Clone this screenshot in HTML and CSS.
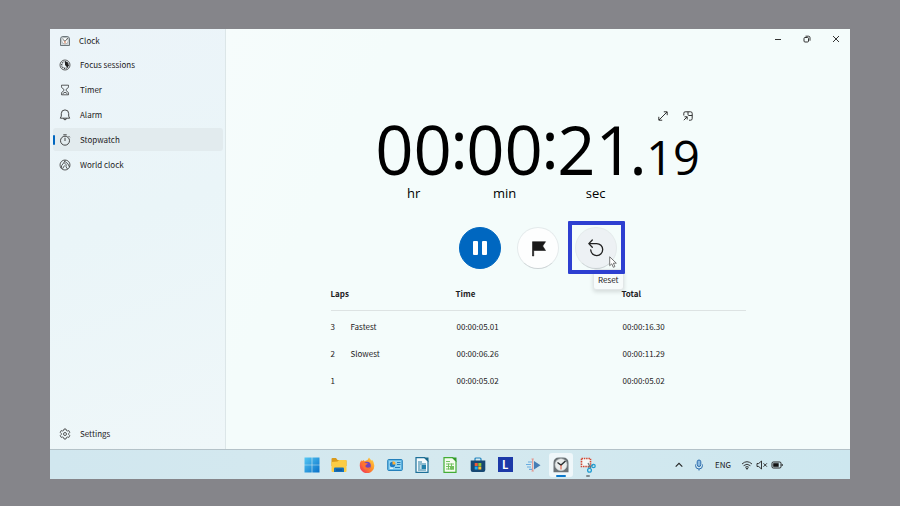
FILE: index.html
```html
<!DOCTYPE html>
<html lang="en">
<head>
<meta charset="utf-8">
<title>Clock</title>
<link rel="stylesheet" href="styles.css">
</head>
<body>
<div class="desktop">
  <div class="app">
    <aside class="sidebar">
      <header class="brand">
        <svg class="icon" viewBox="0 0 12 12"><path d="M1.500 10.500V4Q1.500 1.500 4 1.500h4Q10.500 1.500 10.500 4v6.500z" fill="#d3d9dc" stroke="#6c767b"/><circle cx="6" cy="5.700" r="3.300" fill="#f7fafa" stroke="#8a9397" stroke-width=".6"/><path d="M4 4.500l2 1.800 3-3.300" fill="none" stroke="#666"/><path d="M6 6v2.500" stroke="#e0784c"/></svg>
        <span>Clock</span>
      </header>
      <nav class="menu">
        <a class="item" href="#focus"><svg class="icon" viewBox="0 0 12 12" fill="none" stroke="#333"><circle cx="6" cy="6" r="5" stroke-width=".8"/><circle cx="6" cy="6" r="3.300" stroke-dasharray="1 .7" stroke-width="1.200"/><path d="M6 2.500a3.500 3.500 0 0 1 2.300 6.100L6 6z" fill="#222" stroke="none"/></svg>Focus sessions</a>
        <a class="item" href="#timer"><svg class="icon" viewBox="0 0 12 12" fill="none" stroke="#333" stroke-width=".8"><path d="M2.500 1.200h7v1.600q0 .7-.6 1.200L7 5.500q-.6.500 0 1l1.900 1.500q.6.500.6 1.200v1.600h-7V9.200q0-.7.6-1.200L5 6.500q.6-.5 0-1L3.100 4q-.6-.5-.6-1.200zM3.500 9.800L6 8.200l2.500 1.600"/></svg>Timer</a>
        <a class="item" href="#alarm"><svg class="icon" viewBox="0 0 12 12" fill="none" stroke="#333" stroke-width=".9"><path d="M6 .9a3.700 3.700 0 0 0-3.700 3.700v2.500L1.300 9.200h9.400l-1-2.100V4.600A3.700 3.700 0 0 0 6 .9zM4.600 9.400a1.400 1.400 0 0 0 2.800 0"/></svg>Alarm</a>
        <a class="item active" href="#stopwatch" aria-current="page"><svg class="icon" viewBox="0 0 12 12" fill="none" stroke="#333" stroke-width=".9"><circle cx="6" cy="6.700" r="4.500"/><path d="M4.300.8h3.400M6 3.800V7M9.500 2l1.300 1.300"/></svg>Stopwatch</a>
        <a class="item" href="#world"><svg class="icon" viewBox="0 0 12 12" fill="none" stroke="#333" stroke-width=".8"><circle cx="6" cy="6" r="5"/><path d="M2.200 9.200l.5-2.700L5 3.500l1.200-2.300M5 3.500l2.200 2.300-.2 2L8.500 10M3.500 9.800L5.500 6.500M6 2.500l2.800 2.200L10.500 8"/></svg>World clock</a>
        <a class="item settings" href="#settings"><svg class="icon" viewBox="0 0 12 12" fill="none" stroke="#333" stroke-width=".8"><path d="M5 1h2l.4 1.500.9.500 1.500-.4 1 1.700L9.700 5.500v1l1.100 1.200-1 1.700L8.300 9l-.9.500L7 11H5l-.4-1.500L3.700 9l-1.500.4-1-1.700 1.100-1.200v-1L1.200 4.300l1-1.700 1.500.4.900-.5z" stroke-linejoin="round"/><circle cx="6" cy="6" r="1.500"/></svg>Settings</a>
      </nav>
    </aside>
    <main class="main">
      <header class="titlebar">
        <button class="caption" aria-label="Minimize"><svg viewBox="0 0 8 8"><path d="M1 4.500h6"/></svg></button>
        <button class="caption" aria-label="Restore"><svg viewBox="0 0 8 8"><rect x="1" y="2.500" width="4.500" height="4.500" rx="1"/><path d="M2.500 1.200h3q1.500 0 1.500 1.500v3"/></svg></button>
        <button class="caption" aria-label="Close"><svg viewBox="0 0 8 8"><path d="M1 1l6 6M7 1L1 7"/></svg></button>
      </header>
      <section class="stopwatch">
        <div class="view-tools">
          <button aria-label="Expand"><svg viewBox="0 0 10 10"><path d="M1 9L9 1M5.800.8h3.400v3.400M.8 5.800v3.400h3.400"/></svg></button>
          <button aria-label="Keep on top"><svg viewBox="0 0 10 10"><path d="M.8 4.500V2.200Q.8.800 2.200.8h5.400Q9.200.8 9.200 2.400v5.200q0 1.600-1.600 1.600H6M5 .8v2.700q0 1 1 1h3.200M.8 9.200l3.400-3.400M1.500 5.800h2.700v2.700"/></svg></button>
        </div>
        <div class="readout" role="timer">
          <div class="unit"><span class="digits">00</span><span class="label">hr</span></div>
          <span class="colon">:</span>
          <div class="unit"><span class="digits">00</span><span class="label">min</span></div>
          <span class="colon">:</span>
          <div class="unit"><span class="digits">21</span><span class="label">sec</span></div>
          <span class="point">.</span>
          <span class="hundredths">19</span>
        </div>
        <div class="controls">
          <button class="round primary" aria-label="Pause"><svg viewBox="0 0 20 20"><rect x="3" y="3" width="5" height="14" rx="1" fill="#fff"/><rect x="12" y="3" width="5" height="14" rx="1" fill="#fff"/></svg></button>
          <button class="round" aria-label="Lap"><svg viewBox="0 0 20 20"><path d="M4.500 18V3.700h13L14.700 8l2.800 4.500H5.700V18z" fill="#191919" stroke="#191919" stroke-width=".6" stroke-linejoin="round"/></svg></button>
          <div class="reset">
            <button class="round hover" aria-label="Reset" aria-describedby="tip"><svg viewBox="0 0 20 20" fill="none" stroke="#222" stroke-width="1.300" stroke-linecap="round" stroke-linejoin="round"><path d="M6.300 2L2.800 5.600l3.500 3.600M3 5.600h7.700a6 6 0 1 1-6 6.200"/></svg></button>
            <span class="tooltip" id="tip" role="tooltip">Reset</span>
            <span class="highlight"></span>
            <svg class="pointer" viewBox="0 0 8 12"><path d="M.7.800v8.900l2.100-1.900 1.500 3.500 1.600-.7-1.500-3.400h2.900z" fill="#fff" stroke="#555" stroke-width=".8"/></svg>
          </div>
        </div>
        <table class="laps">
          <colgroup><col class="c-num"><col class="c-name"><col class="c-time"><col></colgroup>
          <thead><tr><th colspan="2">Laps</th><th>Time</th><th>Total</th></tr></thead>
          <tbody>
            <tr><td>3</td><td>Fastest</td><td>00:00:05.01</td><td>00:00:16.30</td></tr>
            <tr><td>2</td><td>Slowest</td><td>00:00:06.26</td><td>00:00:11.29</td></tr>
            <tr><td>1</td><td></td><td>00:00:05.02</td><td>00:00:05.02</td></tr>
          </tbody>
        </table>
      </section>
    </main>
  </div>
  <footer class="taskbar">
    <div class="pinned">
      <button aria-label="Start"><svg viewBox="0 0 16 16"><defs><linearGradient id="win" x2="1" y2="1"><stop stop-color="#55c8f4"/><stop offset="1" stop-color="#0870c8"/></linearGradient></defs><path d="M.5.500h7.200v7.200H.5zM8.300.500h7.200v7.200H8.300zM.5 8.300h7.200v7.200H.5zM8.300 8.300h7.200v7.200H8.300z" fill="url(#win)"/></svg></button>
      <button aria-label="File Explorer"><svg viewBox="0 0 16 16"><path d="M.5 2q0-1 1-1H5l1.500 2h8q1 0 1 1v5H.5z" fill="#d99a1c"/><path d="M.5 5l6-.5L8 3h6.500q1 0 1 1v10q0 1-1 1h-13q-1 0-1-1z" fill="#fbcc45"/><path d="M3 15v-3.500q0-1 1-1h8q1 0 1 1V15z" fill="#1671b8"/><path d="M5 13h6" stroke="#0c4e8d"/></svg></button>
      <button aria-label="Firefox"><svg viewBox="0 0 16 16"><defs><linearGradient id="fox" x1="1" y1="0" x2="0" y2="1"><stop stop-color="#ffe14a"/><stop offset=".45" stop-color="#ff9028"/><stop offset="1" stop-color="#ee2460"/></linearGradient></defs><path d="M2.300 3l.4 1.300L5 3l.3 1.300L8.500 3 10 .5q1 2 3 3.200l.2-1Q15.500 5.500 15.300 9a7.200 7.200 0 0 1-14.500 0Q.6 5.700 2.300 3z" fill="url(#fox)"/><circle cx="8" cy="8.500" r="3.800" fill="#7044bd"/><path d="M3 6q2-1.500 4 0l2 .6-2 1.500q-1.500.8 0 2.200 2.500 1.200 4.500-.5-1 3.500-4.500 3T3 6z" fill="#ff722f"/></svg></button>
      <button aria-label="Control Panel"><svg viewBox="0 0 16 16"><rect x=".7" y="2.500" width="14.600" height="11" rx="1" fill="#69bce8" stroke="#2480bb"/><rect x="2" y="4" width="12" height="8" fill="#93d4f0"/><circle cx="5.500" cy="7.500" r="2.700" fill="#197bc5"/><path d="M5.500 7.500V4.300a3 3 0 0 1 3 3.200z" fill="#ffae35"/><path d="M10 5.500h3.500M10 7.500h3.500M8 10.500h5" stroke="#237dbb"/><path d="M3 11.200h3" stroke="#fff"/></svg></button>
      <button aria-label="LibreOffice Writer"><svg viewBox="0 0 16 16"><path d="M2 .7h8.500L14 4.200v11.100H2z" fill="#f5fbfd" stroke="#1d7098" stroke-width="1.200"/><path d="M10 .5h4.500V5z" fill="#186889"/><path d="M4 5h4M4 7h8M4 9h2.500M4 11h2.500M4 13h8" stroke="#257ba0"/><rect x="7.500" y="8" width="4.500" height="4" fill="#2381ab"/></svg></button>
      <button aria-label="LibreOffice Calc"><svg viewBox="0 0 16 16"><path d="M2 .7h8.500L14 4.200v11.100H2z" fill="#f4fcef" stroke="#43ad35" stroke-width="1.200"/><path d="M10 .5h4.500V5z" fill="#319a2a"/><path d="M4 4.500h4M4 7h8M4 9.500h8M4 12h8M6.500 6.500v6M9.500 6.500v6" stroke="#69bc55" stroke-width=".9" fill="none"/><path d="M8 9h4v3.500H8z" fill="#72bf5c"/></svg></button>
      <button aria-label="Microsoft Store"><svg viewBox="0 0 16 16"><path d="M5 4V2q0-1 1-1h4q1 0 1 1v2" fill="none" stroke="#2183bd" stroke-width="1.200"/><path d="M.7 3.500h14.600V13q0 2-2 2H2.700q-2 0-2-2z" fill="#174873"/><path d="M4.700 6h3v3h-3z" fill="#f25a35"/><path d="M8.300 6h3v3h-3z" fill="#8bc83b"/><path d="M4.700 9.500h3v3h-3z" fill="#20aaf1"/><path d="M8.300 9.500h3v3h-3z" fill="#ffc32d"/></svg></button>
      <button class="letter" aria-label="L"><span>L</span></button>
      <button aria-label="Media tool"><svg viewBox="0 0 16 16"><path d="M3 5h4M1 7.500h5M2 10h4M4 12.300h3" stroke="#69ace0" stroke-width="1.200"/><path d="M9 4L15.500 8.200 9 12.500z" fill="#457eb6"/><path d="M6.500 2h2.300M7.700 2v12M6.500 14h2.300" stroke="#e4938c" stroke-width="1.100"/></svg></button>
      <button class="open focused" aria-label="Clock"><svg viewBox="0 0 16 16"><path d="M.5 15.300V6q0-5.500 5.500-5.500h4q5.500 0 5.500 5.500v9.300z" fill="#6b7276"/><circle cx="8" cy="7.700" r="6" fill="#e9ecec" stroke="#c1c7c9" stroke-width=".6"/><path d="M4.500 5.500L8 8l4.500-4" fill="none" stroke="#292e30" stroke-width="1.400"/><path d="M8 8v4.500" stroke="#e3563a"/></svg></button>
      <button class="open" aria-label="Snipping Tool"><svg viewBox="0 0 16 16" fill="none"><rect x="1.500" y="1.500" width="9" height="8" fill="#f5f8f8" stroke="#d34833" stroke-width="1.600" stroke-dasharray="1.500 .8"/><path d="M8 6l2.700 5M14 7.300L8 10.500" stroke="#65767e" stroke-width="1.200"/><circle cx="13.500" cy="9" r="1.700" stroke="#219ed2" stroke-width="1.300"/><circle cx="9.500" cy="13.300" r="1.900" stroke="#219ed2" stroke-width="1.300"/></svg></button>
    </div>
    <div class="tray">
      <svg viewBox="0 0 12 12"><path d="M2.700 7.700L6 4.400l3.300 3.300" stroke="#222" stroke-width="1.100"/></svg>
      <svg class="mic" viewBox="0 0 12 12" stroke="#2e6eae"><rect x="4.200" y="1" width="3.600" height="6.500" rx="1.800" fill="#8bb9df"/><path d="M2.500 5.500v1a3.500 3.500 0 0 0 7 0v-1M6 10v1.500"/></svg>
      <span class="lang">ENG</span>
      <svg class="wifi" viewBox="0 0 12 12" stroke="#222" stroke-width=".9"><path d="M1 5q5-4.600 10 0M2.600 6.700q3.400-3 6.800 0M4.200 8.300q1.800-1.500 3.600 0"/><circle cx="6" cy="9.600" r=".6" fill="#222"/></svg>
      <svg class="volume" viewBox="0 0 12 12" stroke="#222" stroke-width=".9"><path d="M1 4.500h1.700L5.500 2v8L2.700 7.500H1zM7.500 4.300l3.400 3.400M10.900 4.300L7.500 7.700"/></svg>
      <svg class="battery" viewBox="0 0 12 12"><rect x="1" y="3" width="9" height="6" rx="1.300" stroke="#222"/><path d="M2.200 4.200h5.500v3.600H2.200z" fill="#111"/><path d="M11.200 5v2" stroke="#222"/></svg>
    </div>
  </footer>
</div>
</body>
</html>
```
FILE: styles.css
```css
* { box-sizing: border-box; }

body {
  margin: 0;
  min-height: 100vh;
  display: flex;
  padding: 29px 50px 27px;
  background: #85858a;
  color: #1c2022;
  font-family: "Noto Sans CJK SC", "Noto Sans", sans-serif;
  font-size: 8px;
  line-height: 12px;
}

button {
  margin: 0;
  padding: 0;
  border: 0;
  background: none;
  color: inherit;
  font: inherit;
}

svg { display: block; flex: none; }

.desktop { flex: 1; display: flex; flex-direction: column; }

.app {
  flex: 1;
  display: flex;
  background: linear-gradient(115deg, #f8fcfd, #f4fcfb 35%, #f4fcfb);
}

/* Sidebar */
.sidebar {
  flex: 0 0 176px;
  display: flex;
  flex-direction: column;
  padding: 3px 2px 4px 3px;
  border-right: 1px solid #dce6e8;
  background: linear-gradient(160deg, #ecf4f9, #eaf5f8 45%, #eff7f9);
}

.brand {
  display: flex;
  align-items: center;
  gap: 8px;
  height: 17px;
  padding-left: 6px;
  margin-bottom: 4px;
}

.icon { width: 12px; height: 12px; }

.menu { flex: 1; display: flex; flex-direction: column; gap: 2px; }

.item {
  display: flex;
  align-items: center;
  gap: 9px;
  height: 23px;
  padding-left: 6px;
  border-radius: 3px;
  color: inherit;
  font-size: 8px;
  text-decoration: none;
}

.active {
  position: relative;
  background: #e2ebee;
}

.active::before {
  content: "";
  position: absolute;
  left: 0;
  top: 7px;
  width: 2px;
  height: 10px;
  border-radius: 1px;
  background: #0067c0;
}

.settings { margin-top: auto; }

/* Main pane */
.main { flex: 1; display: flex; flex-direction: column; }

.titlebar { display: flex; justify-content: flex-end; }

.caption {
  display: grid;
  place-items: center;
  width: 29px;
  height: 20px;
}

.caption svg {
  width: 8px;
  height: 8px;
  fill: none;
  stroke: #333;
  stroke-width: 1;
}

.stopwatch {
  display: flex;
  flex-direction: column;
  align-items: center;
  padding-top: 61px;
}

.view-tools {
  display: flex;
  justify-content: flex-end;
  gap: 15px;
  width: 325px;
  padding-right: 8px;
}

.view-tools svg {
  width: 10px;
  height: 12px;
  fill: none;
  stroke: #333;
  stroke-width: 1;
}

.readout {
  display: flex;
  align-items: baseline;
  color: #000;
  font-family: "Open Sans", "Noto Sans", sans-serif;
  font-size: 67px;
  line-height: 54px;
}

.unit {
  display: flex;
  flex-direction: column;
  align-items: center;
  width: 75px;
}

.label { padding-top: 8px; font-size: 13px; line-height: 18px; }

.colon, .point { display: flex; justify-content: center; width: 16px; }

.colon { align-self: flex-start; line-height: 42px; }

.point { width: 10px; }

.hundredths { padding-left: 3px; font-size: 47px; }

.controls { display: flex; gap: 16px; padding-top: 25px; }

.round {
  display: grid;
  place-items: center;
  width: 42px;
  height: 42px;
  border: 1px solid #e4eaeb;
  border-bottom-color: #cdd4d6;
  border-radius: 50%;
  background: #fdfefe;
}

.round svg { width: 20px; height: 20px; }

.primary { border-color: #0067c0; background: #0067c0; }

.hover { background: #edf1f4; }

.reset { position: relative; }

.highlight {
  position: absolute;
  inset: -6px -8px -5px -7px;
  border: 4px solid #2d3fd1;
  border-radius: 1px;
}

.tooltip {
  position: absolute;
  left: 18px;
  top: 42px;
  padding: 4px 4px 3px;
  border: 1px solid #e2e7e8;
  border-radius: 3px;
  background: #f7fbfb;
  box-shadow: 0 2px 4px #0002;
}

.pointer {
  position: absolute;
  left: 34px;
  top: 29px;
  width: 8px;
  height: 12px;
}

/* Lap table */
.laps {
  width: 415px;
  margin-top: 14px;
  border-collapse: collapse;
  table-layout: fixed;
}

.laps th {
  height: 27px;
  padding: 0 0 4px;
  border-bottom: 1px solid #dde3e3;
  font-weight: 600;
  text-align: left;
}

.laps td { height: 27px; padding: 0; }

.laps td:nth-child(n+3) { padding-left: 1px; }

.laps tbody::before { content: ""; display: table-row; height: 3px; }

.c-num { width: 20px; }
.c-name { width: 105px; }
.c-time { width: 166px; }

/* Taskbar */
.taskbar {
  display: grid;
  grid-template-columns: 1fr 304px 1fr;
  height: 30px;
  border-top: 1px solid #b4c2c8;
  background: linear-gradient(90deg, #d1e7ef, #d5e9ef 50%, #cde7ef);
}

.pinned {
  grid-column: 2;
  display: grid;
  grid-template-columns: repeat(11, 1fr);
  align-items: center;
  justify-items: center;
}

.pinned button {
  position: relative;
  display: grid;
  place-items: center;
  width: 24px;
  height: 24px;
  border-radius: 3px;
}

.pinned svg { width: 16px; height: 16px; }

.letter span {
  width: 15px;
  height: 15px;
  background: #1c39a8;
  color: #fff;
  font-size: 11px;
  font-weight: 700;
  line-height: 15px;
}

.pinned .focused { background: #eff7fa; }

.open::after {
  content: "";
  position: absolute;
  bottom: 0;
  width: 4px;
  height: 2px;
  border-radius: 1px;
  background: #7c8b93;
}

.focused::after { width: 10px; background: #0a78cb; }

.tray {
  display: flex;
  align-items: center;
  padding-left: 71px;
}

.tray svg { width: 12px; height: 12px; fill: none; }
.tray .mic { margin-left: 8px; }
.lang { margin: 0 10px; }
.tray .volume, .tray .battery { margin-left: 3px; }
```
